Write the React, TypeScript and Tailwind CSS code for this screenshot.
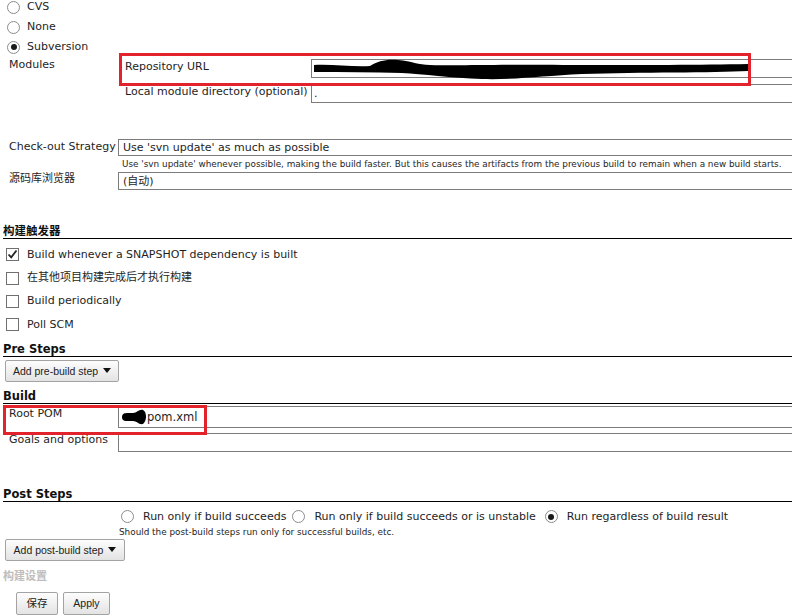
import React from 'react';

const font = "font-['DejaVu_Sans','Noto_Sans_CJK_SC',sans-serif]";

const Radio: React.FC<{ checked?: boolean }> = ({ checked }) => (
  <span className="w-[13px] h-[13px] rounded-full border border-[#8c8c8c] bg-white flex items-center justify-center shrink-0">
    {checked && <span className="w-[6px] h-[6px] rounded-full bg-[#1a1a1a]" />}
  </span>
);

const Checkbox: React.FC<{ checked?: boolean }> = ({ checked }) => (
  <span className="w-[13px] h-[13px] border border-[#707070] bg-white relative shrink-0">
    {checked && (
      <svg viewBox="0 0 13 13" className="absolute -left-px -top-px w-[13px] h-[13px]">
        <path d="M2.5 6.5 L5.2 9.3 L10.5 2.5" fill="none" stroke="#222" strokeWidth="1.8" />
      </svg>
    )}
  </span>
);

const Arrow = () => (
  <svg viewBox="0 0 8 5" className="w-[8px] h-[5px] ml-[5px]">
    <path d="M0 0 H8 L4 5 Z" fill="#111" />
  </svg>
);

const Button: React.FC<{ children: React.ReactNode; className?: string }> = ({ children, className }) => (
  <div
    className={`h-[22px] flex items-center justify-center border border-[#a3a3a3] rounded-[2px] bg-linear-to-b from-[#fdfdfd] to-[#e3e3e3] text-[10.5px] text-[#222] font-['Liberation_Sans','Noto_Sans_CJK_SC',sans-serif] ${className ?? ''}`}
  >
    {children}
  </div>
);

const SectionHeader: React.FC<{ title: string; className?: string }> = ({ title, className }) => (
  <div className={`ml-[3px] h-[15px] leading-[14px] border-b border-black text-[11.5px] font-bold text-[#111] ${className ?? ''}`}>
    {title}
  </div>
);

export default function App() {
  return (
    <div className={`relative w-[792px] h-[616px] overflow-hidden bg-white text-[11px] leading-4 text-[#1e1e1e] ${font}`}>
      {/* SCM radios */}
      <div className="-mt-[3px]">
        {['CVS', 'None', 'Subversion'].map((label) => (
          <div key={label} className="h-[20px] flex items-center pl-[7px] gap-[7px]">
            <Radio checked={label === 'Subversion'} />
            <span>{label}</span>
          </div>
        ))}
      </div>

      {/* Modules */}
      <div className="flex items-start">
        <div className="w-[118px] pl-[9px]">Modules</div>
        <div className="flex-1 pt-[2px] relative">
          <div className="flex items-start">
            <div className="w-[193px] pl-[7px]">Repository URL</div>
            <div className="flex-1 h-[19px] border border-[#7c7c7c] -mr-[10px] relative">
              <svg viewBox="0 0 440 26" className="absolute left-0 top-[-1px] w-[440px] h-[26px]">
                <path
                  d="M2 6 C20 5 40 8 58 7 C66 2 74 0 86 1 C100 2 106 6 118 6 C150 7 200 5 260 6 C330 6 390 6 436 5 C440 6 440 10 436 12 C400 14 330 13 270 15 C230 17 200 21 170 20 C140 19 110 15 90 14 C60 13 30 13 2 13 Z"
                  fill="#000"
                />
              </svg>
            </div>
          </div>
          <div className="flex items-start mt-[6px]">
            <div className="w-[193px] pl-[7px]">Local module directory (optional)</div>
            <div className="flex-1 h-[19px] border border-[#7c7c7c] -mr-[10px] pl-[2px] leading-[18px]">.</div>
          </div>
          <div className="absolute left-[1px] top-[-4px] w-[632px] h-[33px] border-[3px] border-[#e3232b] pointer-events-none" />
        </div>
      </div>

      {/* Check-out Strategy */}
      <div className="flex items-start mt-[36px]">
        <div className="w-[118px] pl-[9px]">Check-out Strategy</div>
        <div className="flex-1">
          <div className="h-[17px] border border-[#7c7c7c] -mr-[10px] pl-[4px] leading-[16px]">Use 'svn update' as much as possible</div>
          <div className="h-[16px] pl-[4px] text-[8.85px] leading-[16px]">
            Use 'svn update' whenever possible, making the build faster. But this causes the artifacts from the previous build to remain when a new build starts.
          </div>
        </div>
      </div>
      <div className="flex items-start">
        <div className="w-[118px] pl-[9px] -mt-[1px]">源码库浏览器</div>
        <div className="flex-1 h-[18px] border border-[#7c7c7c] -mr-[10px] pl-[4px] leading-[17px]">(自动)</div>
      </div>

      {/* Triggers */}
      <SectionHeader title="构建触发器" className="mt-[34px]" />
      <div className="mt-[4px]">
        {[
          { label: 'Build whenever a SNAPSHOT dependency is built', checked: true },
          { label: '在其他项目构建完成后才执行构建' },
          { label: 'Build periodically' },
          { label: 'Poll SCM' },
        ].map((item) => (
          <div key={item.label} className="h-[23.4px] flex items-center pl-[6px] gap-[8px]">
            <Checkbox checked={item.checked} />
            <span>{item.label}</span>
          </div>
        ))}
      </div>

      {/* Pre Steps */}
      <SectionHeader title="Pre Steps" className="mt-[5px]" />
      <Button className="ml-[5px] mt-[3px] w-[114px]">
        Add pre-build step
        <Arrow />
      </Button>

      {/* Build */}
      <SectionHeader title="Build" className="mt-[7px]" />
      <div className="relative">
        <div className="flex items-start mt-[2px]">
          <div className="w-[118px] pl-[9px]">Root POM</div>
          <div className="flex-1 h-[22px] border border-[#7c7c7c] -mr-[10px] flex items-center pl-[2px]">
            <svg viewBox="0 0 26 18" className="w-[26px] h-[18px]">
              <path d="M1 9 C1 4 6 5 12 5 C16 5 18 1 22 2 C26 4 26 13 22 16 C18 17 16 13 12 13 C6 13 1 14 1 9 Z" fill="#000" />
            </svg>
            <span className="text-[11.5px]">pom.xml</span>
          </div>
        </div>
        <div className="flex items-start mt-[5px]">
          <div className="w-[118px] pl-[9px] -mt-[1px]">Goals and options</div>
          <div className="flex-1 h-[19px] border border-[#7c7c7c] -mr-[10px]" />
        </div>
        <div className="absolute left-[3px] top-[-1px] w-[204px] h-[30px] border-[3px] border-[#e3232b] pointer-events-none" />
      </div>

      {/* Post Steps */}
      <SectionHeader title="Post Steps" className="mt-[35px]" />
      <div className="mt-[7px] pl-[121px] h-[16px] flex items-center">
        <Radio />
        <span className="ml-[9px]">Run only if build succeeds</span>
        <span className="ml-[6px]"><Radio /></span>
        <span className="ml-[9px]">Run only if build succeeds or is unstable</span>
        <span className="ml-[9px]"><Radio checked /></span>
        <span className="ml-[9px]">Run regardless of build result</span>
      </div>
      <div className="pl-[119px] mt-[1px] text-[8.85px] leading-[13px]">Should the post-build steps run only for successful builds, etc.</div>
      <Button className="ml-[5px] mt-0 w-[120px]">
        Add post-build step
        <Arrow />
      </Button>
      <div className="ml-[3px] mt-[9px] text-[11px] font-bold leading-[14px] text-[#bdbdbd]">构建设置</div>
      <div className="flex gap-[5px] ml-[16px] mt-[8px]">
        <Button className="w-[42px] h-[23px]">保存</Button>
        <Button className="w-[47px] h-[23px]">Apply</Button>
      </div>
    </div>
  );
}
